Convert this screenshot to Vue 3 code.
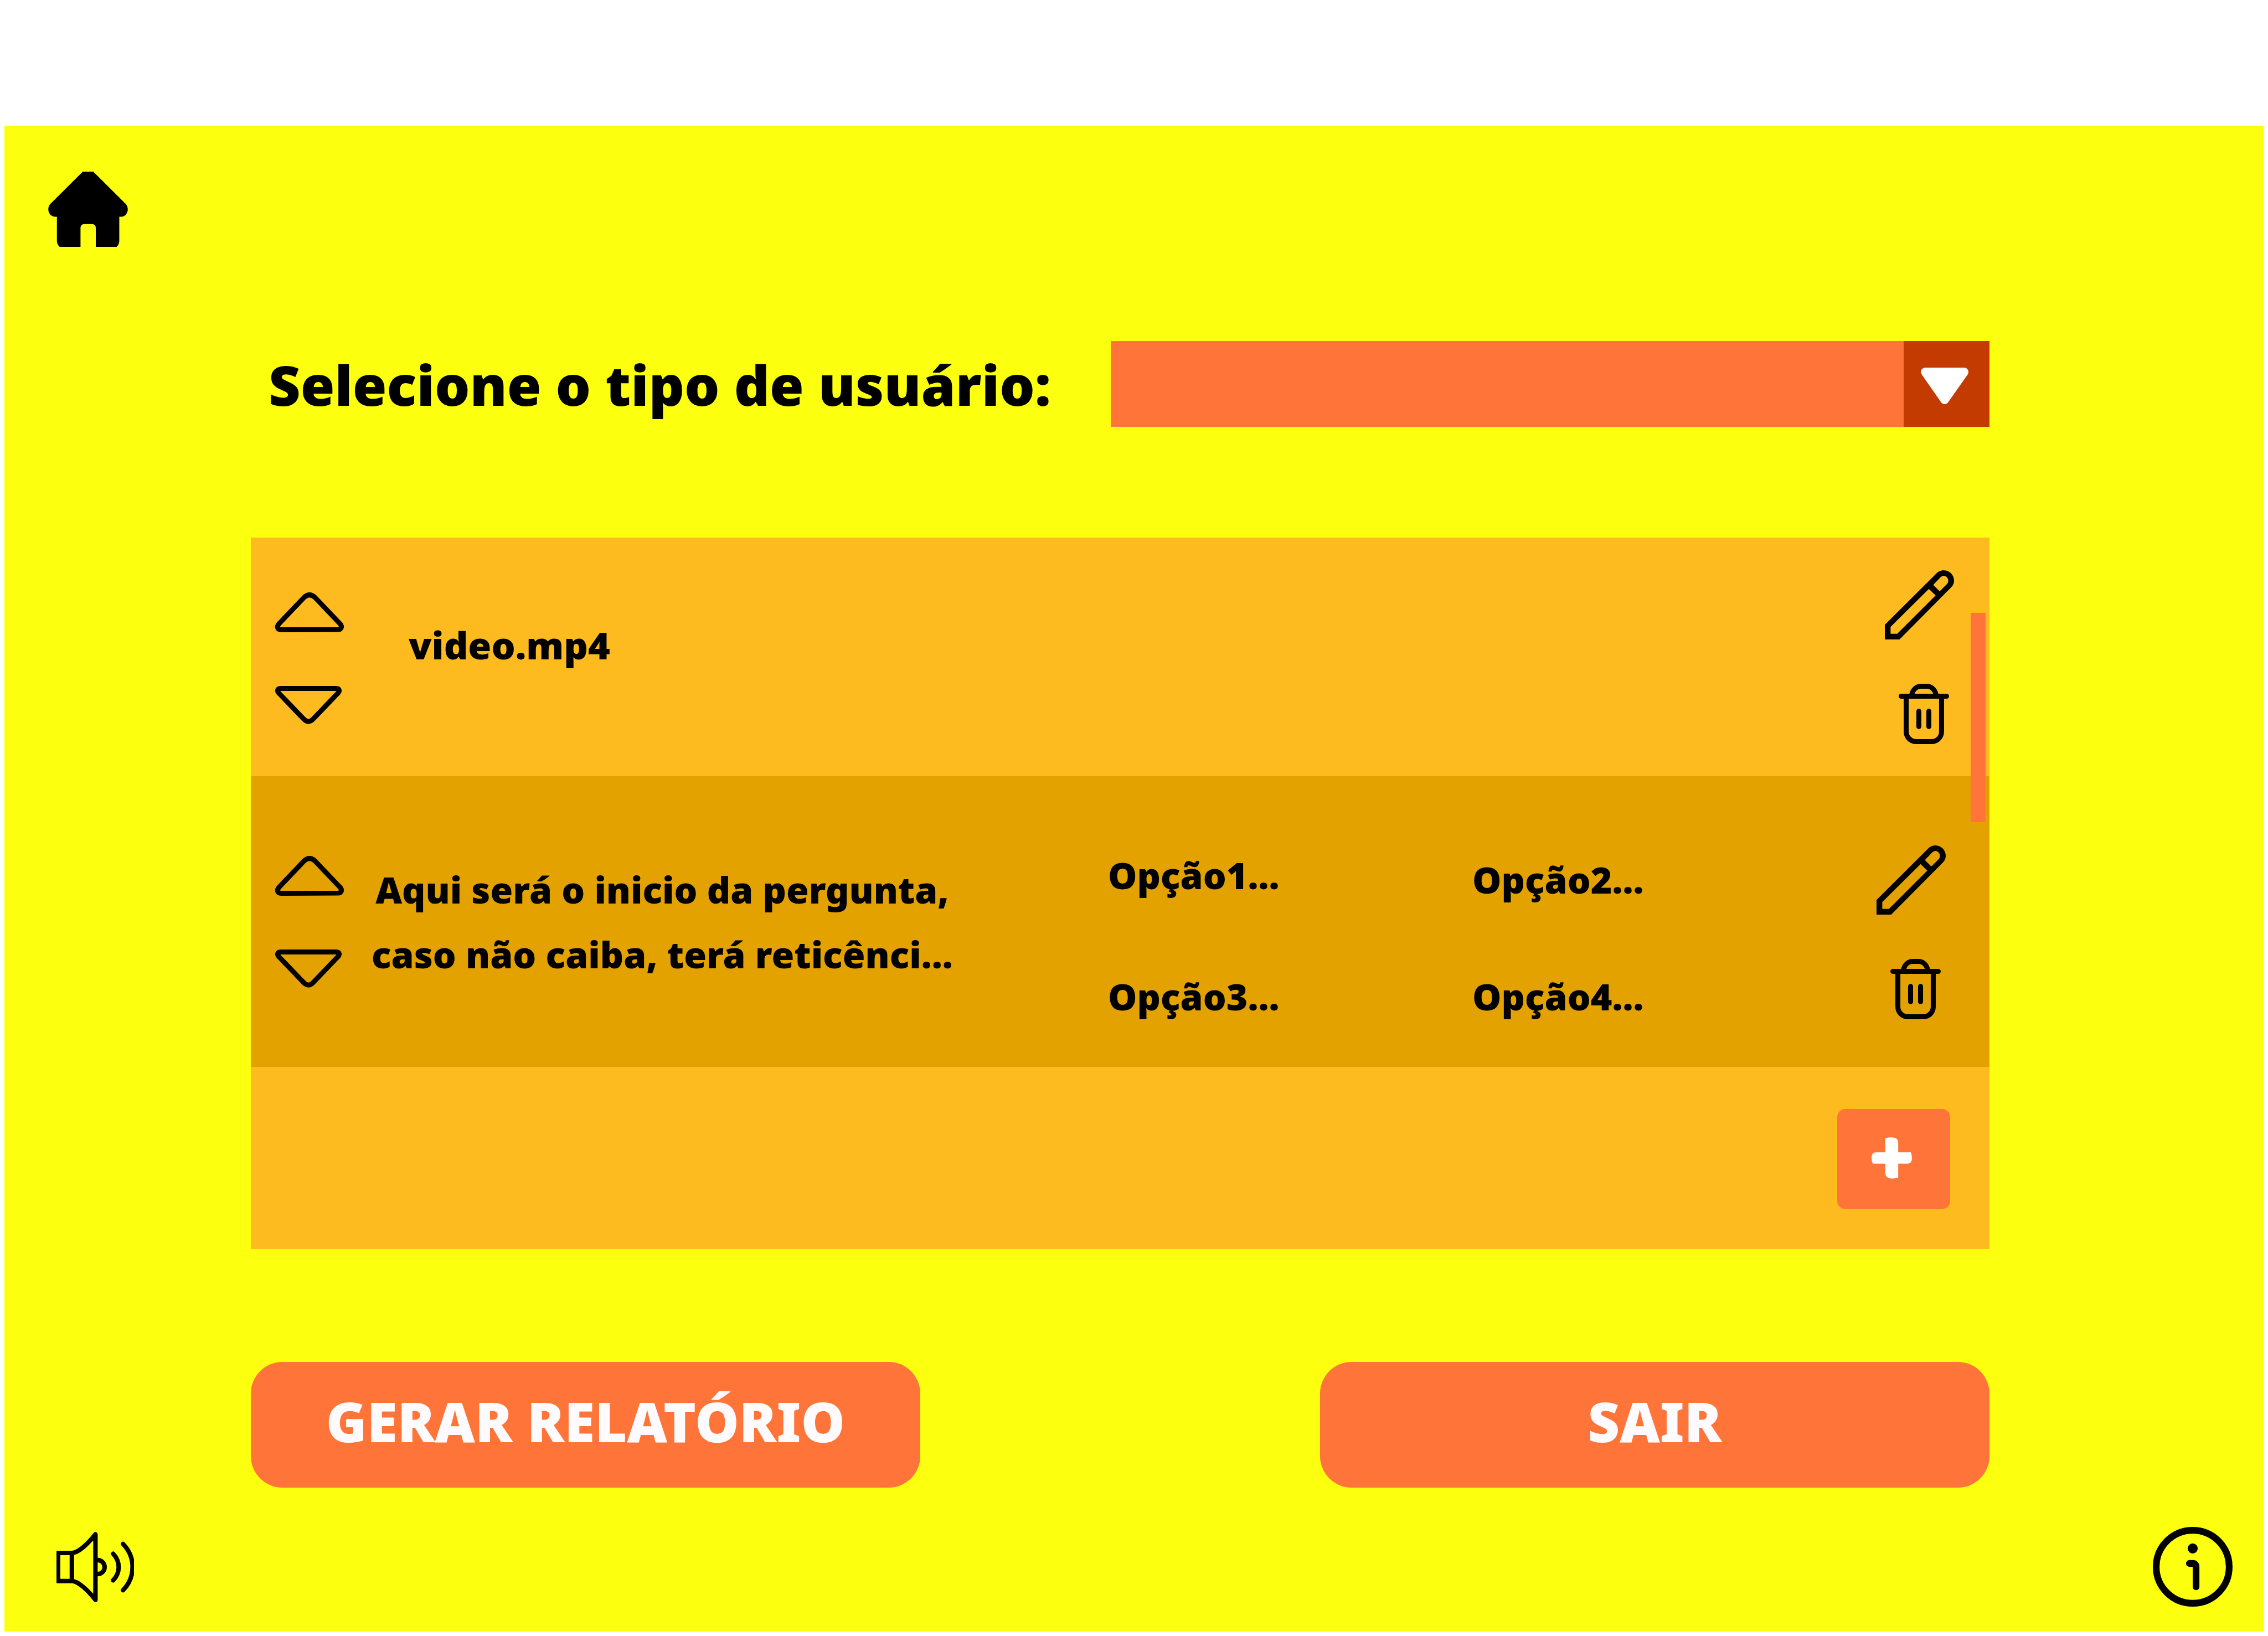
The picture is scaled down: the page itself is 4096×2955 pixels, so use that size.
<script setup>
import { ref } from 'vue'

const userType = ref('')
const optionColumns = [
  { name: 'loose', items: ['Opção1...', 'Opção3...'] },
  { name: 'tight', items: ['Opção2...', 'Opção4...'] }
]
const rows = [
  { id: 'video', kind: 'media', lines: ['video.mp4'], options: [] },
  {
    id: 'pergunta',
    kind: 'question',
    lines: ['Aqui será o inicio da pergunta,', 'caso não caiba, terá reticênci...'],
    options: optionColumns
  }
]
</script>

<template>
  <div class="page">
    <main class="screen">
      <header class="top">
        <button class="icon-button" type="button" aria-label="Início">
          <svg class="home" viewBox="115 410 190 180" aria-hidden="true">
            <path d="M197.5 410H222.5L300 487C303 490 305 495 305 500C305 510 298 518 289 518H284.7V575Q284.7 584 278 590H228.5V545Q228.5 535.5 219 535.5H201.5Q192 535.5 192 545V590H142.5Q135.6 584 135.6 575V518H132C122 518 115 510 115 500C115 495 117 490 120 487Z" />
          </svg>
        </button>
      </header>

      <div class="content">
        <div class="picker">
          <label class="picker-label" for="user-type">Selecione o tipo de usuário:</label>
          <div class="select-box">
            <select id="user-type" v-model="userType" class="select">
              <option value=""></option>
            </select>
            <span class="select-arrow">
              <svg viewBox="0 0 338 260" aria-hidden="true">
                <path d="M32 0H308C332 0 346 27 334 47L195 245C182 265 156 265 143 245L5 47C-8 27 6 0 32 0Z" />
              </svg>
            </span>
          </div>
        </div>

        <section class="panel">
          <ul class="rows">
            <li v-for="row in rows" :key="row.id" class="row" :class="row.kind">
              <div class="order">
                <button class="icon-button" type="button" aria-label="Mover para cima">
                  <svg class="up" viewBox="0 0 166 96" aria-hidden="true">
                    <path d="M70 12Q83 0 96 12L155 74C163 82 160 89 152 89.5L15 90C5 90 3 82 11 74Z" />
                  </svg>
                </button>
                <button class="icon-button" type="button" aria-label="Mover para baixo">
                  <svg class="down" viewBox="0 0 161 92" aria-hidden="true">
                    <path d="M12 20C3 12 6 6 14 6H147C155 6 158 12 149 20L92.5 79Q80.5 92 68.5 79Z" />
                  </svg>
                </button>
              </div>
              <p class="text">
                <span class="lines">
                  <span v-for="line in row.lines" :key="line" class="line">{{ line }}</span>
                </span>
              </p>
              <div v-if="row.options.length" class="options">
                <div v-for="column in row.options" :key="column.name" class="option-column" :class="column.name">
                  <span v-for="item in column.items" :key="item">{{ item }}</span>
                </div>
              </div>
              <div class="actions">
                <button class="icon-button" type="button" aria-label="Editar">
                  <svg class="pencil" viewBox="0 0 165 165" aria-hidden="true">
                    <path fill-rule="evenodd" d="M0 165V130L122 8.5Q130 0 140 0C154 0 165 11 165 25Q165 34 158 41L35 165ZM13.7 151.5H29.5L121 60L105 44.4L13.7 135ZM115.3 35L130.7 50L148 33C155 26 150 13.2 140 13.2Q136 13.2 133 16.5Z" />
                  </svg>
                </button>
                <button class="icon-button trash-button" type="button" aria-label="Excluir">
                  <svg class="trash" viewBox="0 0 121 145" aria-hidden="true">
                    <path d="M6 30H115M18 30V115A24 24 0 0 0 42 139H79A24 24 0 0 0 103 115V30M31 28C33 15 42 6 54 6H67C79 6 88 15 90 28M48.5 66V103M72.5 66V103" />
                  </svg>
                </button>
              </div>
            </li>
          </ul>
          <div class="panel-footer">
            <button class="add" type="button" aria-label="Adicionar">
              <svg viewBox="0 0 97 99" aria-hidden="true">
                <path d="M33 2Q64-5 64 14V36H94Q97 42 97 50Q97 63 86 63H64V97Q33 104 33 85V63H3Q0 57 0 49Q0 36 11 36H33Z" />
              </svg>
            </button>
          </div>
          <div class="scroll-thumb"></div>
        </section>

        <div class="buttons">
          <button class="main-button" type="button">GERAR RELATÓRIO</button>
          <button class="main-button" type="button">SAIR</button>
        </div>
      </div>

      <footer class="bottom">
        <button class="icon-button" type="button" aria-label="Som">
          <svg class="sound" viewBox="405 183 555 504" aria-hidden="true">
            <path d="M416 334H515C560 334 630 268 684 200V670C630 602 560 535 515 535H416ZM515 334V535M700 385A50 50 0 0 1 700 485M811 340C863.7 395 863.7 476 811 530M882 269C972.7 365 972.7 506 882 601" />
          </svg>
        </button>
        <button class="icon-button" type="button" aria-label="Informações">
          <svg class="info" viewBox="0 0 570 570" aria-hidden="true">
            <circle class="ring" cx="285" cy="285" r="261" />
            <circle cx="285" cy="154" r="36" />
            <path class="ring" d="M261 261H285Q309 261 309 285V428" />
          </svg>
        </button>
      </footer>
    </main>
  </div>
</template>

<style>
body {
  margin: 0;
  background: #ffffff;
}
</style>

<style scoped>
.page {
  box-sizing: border-box;
  min-height: 100vh;
  padding: 227px 8px 8px;
  display: flex;
  flex-direction: column;
  font-family: "Noto Sans", "Open Sans", sans-serif;
  font-weight: 900;
  color: #000000;
}

.screen {
  flex: 1;
  display: flex;
  flex-direction: column;
  background: #fcff0e;
}

button {
  margin: 0;
  padding: 0;
  border: 0;
  font: inherit;
  cursor: pointer;
}

svg {
  display: block;
}

.icon-button {
  display: block;
  background: none;
}

.top {
  padding: 83px 79px 0;
}

.home {
  width: 144px;
  height: 136px;
}

.content {
  padding: 170px 495px 0 445px;
}

.picker {
  display: flex;
  align-items: center;
  justify-content: space-between;
  padding-left: 32px;
}

.picker-label {
  font-size: 100px;
  line-height: 120px;
  white-space: nowrap;
}

.select-box {
  position: relative;
  width: 1587px;
  height: 155px;
}

.select {
  appearance: none;
  width: 100%;
  height: 100%;
  padding: 0 180px 0 40px;
  border: 0;
  border-radius: 0;
  background: #ff7539;
  font: inherit;
  font-size: 66px;
}

.select-arrow {
  position: absolute;
  top: 0;
  right: 0;
  box-sizing: border-box;
  width: 155px;
  height: 100%;
  padding: 48px 0 0 31px;
  background: #c33b00;
  pointer-events: none;
}

.select-arrow svg {
  width: 86px;
  height: 66px;
  fill: #ffffff;
}

.panel {
  position: relative;
  margin-top: 200px;
  background: #fdbb20;
}

.rows {
  margin: 0;
  padding: 0;
  list-style: none;
}

.row {
  box-sizing: border-box;
  display: flex;
  align-items: center;
  padding-left: 43px;
}

.media {
  min-height: 431px;
  padding-right: 64px;
}

.question {
  min-height: 525px;
  padding-right: 79px;
  background: #e3a200;
}

.order {
  width: 175px;
  display: flex;
  flex-direction: column;
  gap: 97px;
}

.media .order {
  padding-top: 4px;
}

.up,
.down {
  fill: none;
  stroke: #000000;
  stroke-width: 12;
  stroke-linejoin: round;
}

.up {
  width: 126px;
  height: 72px;
}

.down {
  width: 122px;
  height: 69px;
}

.text,
.options {
  font-size: 66px;
  line-height: 117px;
  white-space: nowrap;
}

.text {
  flex: 1330 1 0;
  display: flex;
  margin: 0;
}

.lines {
  display: block;
  text-align: center;
}

.line {
  display: block;
}

.media .text {
  padding: 0 0 44px 67px;
  font-size: 68px;
}

.options {
  flex: 1388 1 0;
  display: grid;
  grid-template-columns: 658fr 730fr;
  align-items: end;
  padding-top: 50px;
}

.option-column {
  display: flex;
  flex-direction: column;
}

.loose {
  gap: 102px;
}

.tight {
  gap: 94px;
}

.actions {
  display: flex;
  flex-direction: column;
  align-items: flex-end;
  gap: 80px;
}

.question .actions {
  padding-top: 38px;
}

.pencil {
  width: 125px;
  height: 125px;
}

.trash-button {
  margin-right: 9px;
}

.trash {
  width: 91px;
  height: 109px;
  fill: none;
  stroke: #000000;
  stroke-width: 12;
  stroke-linecap: round;
}

.panel-footer {
  box-sizing: border-box;
  min-height: 329px;
  display: flex;
  justify-content: flex-end;
  align-items: flex-start;
  padding: 76px 71px 0 0;
}

.add {
  width: 204px;
  height: 181px;
  padding: 0 8px 4px 0;
  display: flex;
  align-items: center;
  justify-content: center;
  border-radius: 15px;
  background: #ff7539;
}

.add svg {
  width: 73px;
  height: 75px;
  fill: #ffffff;
}

.scroll-thumb {
  position: absolute;
  top: 136px;
  right: 7px;
  width: 27px;
  height: 378px;
  background: #ff7539;
}

.buttons {
  display: flex;
  justify-content: space-between;
  margin-top: 204px;
}

.main-button {
  width: 1209px;
  height: 227px;
  padding-bottom: 16px;
  border-radius: 57px;
  background: #ff7539;
  color: #fdfbfd;
  font-size: 100px;
  line-height: 120px;
}

.bottom {
  display: flex;
  align-items: center;
  justify-content: space-between;
  padding: 71px 56px 45px 94px;
}

.sound {
  width: 140px;
  height: 127px;
  fill: none;
  stroke: #000000;
  stroke-width: 32;
  stroke-linecap: round;
  stroke-linejoin: round;
}

.info {
  width: 144px;
  height: 144px;
}

.ring {
  fill: none;
  stroke: #000000;
  stroke-width: 48;
  stroke-linecap: round;
}
</style>
